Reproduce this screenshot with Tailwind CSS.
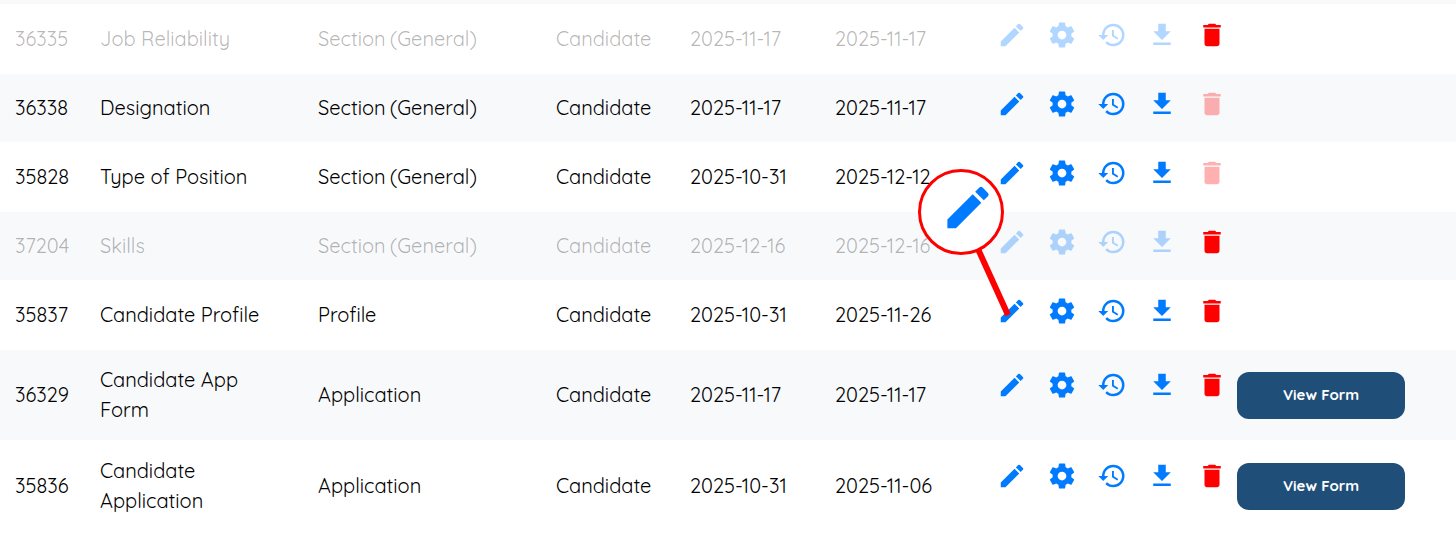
<!DOCTYPE html>
<html lang="en">
<head>
<meta charset="utf-8">
<meta name="viewport" content="width=device-width, initial-scale=1">
<title>Forms</title>
<script src="https://cdn.jsdelivr.net/npm/@tailwindcss/browser@4"></script>
</head>
<body class="bg-white font-[Quicksand,Lato,sans-serif] text-xl/[30px] font-normal text-black">
<svg class="hidden" aria-hidden="true">
  <symbol id="edit" viewBox="0 0 24 24"><path d="M3 17.25V21h3.75L17.81 9.94l-3.75-3.75L3 17.25zM20.71 7.04a1 1 0 0 0 0-1.41l-2.34-2.34a1 1 0 0 0-1.41 0l-1.83 1.83 3.75 3.75 1.83-1.83z"/></symbol>
  <symbol id="settings" viewBox="0 0 24 24"><path d="M19.43 12.98c.04-.32.07-.64.07-.98s-.03-.66-.07-.98l2.11-1.65c.19-.15.24-.42.12-.64l-2-3.46c-.12-.22-.39-.3-.61-.22l-2.49 1c-.52-.4-1.08-.73-1.69-.98l-.38-2.65C14.46 2.18 14.25 2 14 2h-4c-.25 0-.46.18-.49.42l-.38 2.65c-.61.25-1.17.59-1.69.98l-2.49-1c-.23-.09-.49 0-.61.22l-2 3.46c-.13.22-.07.49.12.64l2.11 1.65c-.04.32-.07.65-.07.98s.03.66.07.98l-2.11 1.65c-.19.15-.24.42-.12.64l2 3.46c.12.22.39.3.61.22l2.49-1c.52.4 1.08.73 1.69.98l.38 2.65c.03.24.24.42.49.42h4c.25 0 .46-.18.49-.42l.38-2.65c.61-.25 1.17-.59 1.69-.98l2.49 1c.23.09.49 0 .61-.22l2-3.46c.12-.22.07-.49-.12-.64l-2.11-1.65zM12 15.5c-1.93 0-3.5-1.57-3.5-3.5s1.57-3.5 3.5-3.5 3.5 1.57 3.5 3.5-1.57 3.5-3.5 3.5z"/></symbol>
  <symbol id="history" viewBox="0 0 24 24"><path d="M13 3a9 9 0 0 0-9 9H1l3.89 3.89.07.14L9 12H6c0-3.87 3.13-7 7-7s7 3.13 7 7-3.13 7-7 7c-1.93 0-3.68-.79-4.94-2.06l-1.42 1.42A8.954 8.954 0 0 0 13 21a9 9 0 0 0 0-18zm-1 5v5l4.28 2.54.72-1.21-3.5-2.08V8H12z"/></symbol>
  <symbol id="download" viewBox="0 0 24 24"><path d="M19 9h-4V3H9v6H5l7 7 7-7zM5 18v2h14v-2H5z"/></symbol>
  <symbol id="trash" viewBox="0 0 24 24"><path d="M6 19c0 1.1.9 2 2 2h8c1.1 0 2-.9 2-2V7H6v12zM19 4h-3.5l-1-1h-5l-1 1H5v2h14V4z"/></symbol>
</svg>

<main class="relative pt-1">
  <table class="w-full table-fixed border-collapse border-t border-white text-left">
    <colgroup>
      <col class="w-[85px]"><col class="w-[218px]"><col class="w-[238px]"><col class="w-[134px]"><col class="w-[145px]"><col class="w-[162px]"><col class="w-[255px]"><col>
    </colgroup>
    <tbody id="rows"></tbody>
  </table>

  <!-- Magnifier callout for the edit action -->
  <svg class="pointer-events-none absolute top-[165px] left-[915px] h-[155px] w-[105px]" viewBox="0 0 105 155" aria-hidden="true">
    <path d="M63 84 93 150" fill="none" stroke="#f00" stroke-width="6"/>
    <circle cx="46" cy="47" r="41.5" fill="#fff" stroke="#f00" stroke-width="3"/>
    <use href="#edit" x="25.500" y="15" width="55" height="55" fill="#007bff"/>
  </svg>
</main>
<div class="absolute inset-x-0 top-0 h-1 bg-[#f8f9fb]"></div>

<script>
  // id, name, type, category, created, updated, state
  const forms = [
    ['36335', 'Job Reliability', 'Section&thinsp;(General)', 'Candidate', '2025-11-17', '2025-11-17', 'inactive'],
    ['36338', 'Designation', 'Section&thinsp;(General)', 'Candidate', '2025-11-17', '2025-11-17', 'locked'],
    ['35828', 'Type of Position', 'Section&thinsp;(General)', 'Candidate', '2025-10-31', '2025-12-12', 'locked'],
    ['37204', 'Skills', 'Section&thinsp;(General)', 'Candidate', '2025-12-16', '2025-12-16', 'inactive'],
    ['35837', 'Candidate Profile', 'Profile', 'Candidate', '2025-10-31', '2025-11-26', 'active'],
    ['36329', 'Candidate App<br>Form', 'Application', 'Candidate', '2025-11-17', '2025-11-17', 'form'],
    ['35836', 'Candidate<br>Application', 'Application', 'Candidate', '2025-10-31', '2025-11-06', 'form'],
  ];
  const icons = [['edit', 'Edit'], ['settings', 'Settings'], ['history', 'History'], ['download', 'Download'], ['trash', 'Delete']];

  document.getElementById('rows').innerHTML = forms.map(([id, name, type, category, created, updated, state]) => {
    const off = state === 'inactive';
    const form = state === 'form';
    const cells = [id, name, type, category, created, updated]
      .map(text => `<td class="px-[15px] whitespace-nowrap ${off ? 'text-black/30' : ''}">${text}</td>`).join('');
    const actions = icons.map(([icon, label]) => {
      const faded = icon === 'trash' ? state === 'locked' : off;
      return `<button type="button" aria-label="${label}" ${faded ? 'disabled' : ''} class="size-[30px] ${icon === 'trash' ? 'text-[#f00]' : 'text-[#007bff]'} ${faded ? 'opacity-30' : 'cursor-pointer'}"><svg class="size-[30px] fill-current" aria-hidden="true"><use href="#${icon}"/></svg></button>`;
    }).join('');
    const view = form ? '<button type="button" class="block h-[47px] w-[168px] cursor-pointer rounded-xl bg-[#1f4e79] text-[15px] font-bold text-white">View Form</button>' : '';
    return `<tr class="border-b border-white even:bg-[#f8f9fb] ${form ? 'h-[91px]' : 'h-[69px]'}">${cells}
      <td class="pl-[15px] align-top ${form ? 'pt-5' : 'pt-[15px]'}"><div class="flex gap-5">${actions}</div></td>
      <td>${view}</td></tr>`;
  }).join('');
</script>
</body>
</html>
